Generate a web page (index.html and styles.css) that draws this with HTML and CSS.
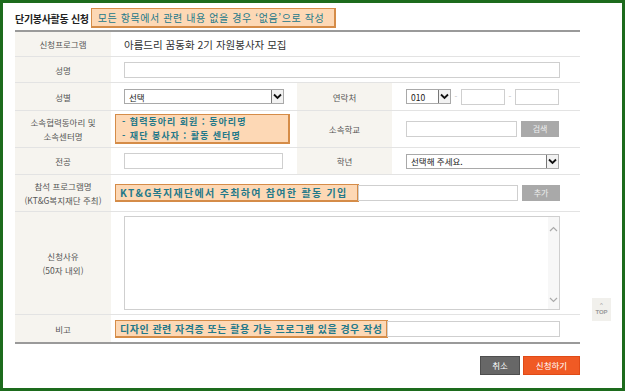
FILE: index.html
```html
<!DOCTYPE html>
<html lang="ko">

<head>
  <meta charset="UTF-8">
  <title>단기봉사활동 신청</title>
  <link rel="stylesheet" href="styles.css">
</head>

<body>
  <div class="frame">
    <div class="head">
      <div class="headTitle">단기봉사활동 신청</div>
      <div class="note noteHead">모든 항목에서 관련 내용 없을 경우 ‘없음’으로 작성</div>
    </div>

    <table class="formTable">
      <colgroup>
        <col class="colLabel">
        <col class="colMain">
        <col class="colLabel2">
        <col class="colSub">
      </colgroup>
      <tr class="row1">
        <th>신청프로그램</th>
        <td colspan="3" class="progName">아름드리 꿈동화 2기 자원봉사자 모집</td>
      </tr>
      <tr class="row2">
        <th>성명</th>
        <td colspan="3"><span class="inp inpName"></span></td>
      </tr>
      <tr class="row3">
        <th>성별</th>
        <td><span class="sel selGender">선택<span class="arrow"><svg width="9" height="7" viewBox="0 0 9 7"><path d="M1 1.5 L4.5 5 L8 1.5" fill="none" stroke="#111" stroke-width="1.8"/></svg></span></span></td>
        <th class="sub">연락처</th>
        <td class="subCell">
          <div class="phone">
            <span class="sel selPhone">010<span class="arrow"><svg width="9" height="7" viewBox="0 0 9 7"><path d="M1 1.5 L4.5 5 L8 1.5" fill="none" stroke="#111" stroke-width="1.8"/></svg></span></span>
            <span class="dash">-</span>
            <span class="inp inpPhone"></span>
            <span class="dash">-</span>
            <span class="inp inpPhone"></span>
          </div>
        </td>
      </tr>
      <tr class="row4">
        <th>소속협력동아리 및<br>소속센터명</th>
        <td><div class="note noteClub">- 협력동아리 회원 : 동아리명<br>- 재단 봉사자 : 활동 센터명</div></td>
        <th class="sub">소속학교</th>
        <td class="subCell">
          <div class="line">
            <span class="inp inpSchool"></span>
            <span class="grayBtn">검색</span>
          </div>
        </td>
      </tr>
      <tr class="row5">
        <th>전공</th>
        <td><span class="inp inpMajor"></span></td>
        <th class="sub">학년</th>
        <td class="subCell"><span class="sel selGrade">선택해 주세요.<span class="arrow"><svg width="9" height="7" viewBox="0 0 9 7"><path d="M1 1.5 L4.5 5 L8 1.5" fill="none" stroke="#111" stroke-width="1.8"/></svg></span></span></td>
      </tr>
      <tr class="row6">
        <th>참석 프로그램명<br>(KT&amp;G복지재단 주최)</th>
        <td colspan="3">
          <div class="line">
            <div class="note noteProg">KT&amp;G복지재단에서 주최하여 참여한 활동 기입</div>
            <span class="inp inpProg"></span>
            <span class="grayBtn">추가</span>
          </div>
        </td>
      </tr>
      <tr class="row7">
        <th>신청사유<br>(50자 내외)</th>
        <td colspan="3">
          <div class="textBox">
            <div class="scroll">
              <svg width="9" height="6" viewBox="0 0 9 6"><path d="M1 5 L4.5 1.5 L8 5" fill="none" stroke="#aaa" stroke-width="1.2"/></svg>
              <svg width="9" height="6" viewBox="0 0 9 6"><path d="M1 1 L4.5 4.5 L8 1" fill="none" stroke="#aaa" stroke-width="1.2"/></svg>
            </div>
          </div>
        </td>
      </tr>
      <tr class="row8">
        <th>비고</th>
        <td colspan="3">
          <div class="line">
            <div class="note noteEtc">디자인 관련 자격증 또는 활용 가능 프로그램 있을 경우 작성</div>
            <span class="inp inpEtc"></span>
          </div>
        </td>
      </tr>
    </table>

    <div class="actions">
      <span class="btn btnCancel">취소</span>
      <span class="btn btnApply">신청하기</span>
    </div>

    <div class="topBtn">
      <span class="topArrow">^</span>
      <span>TOP</span>
    </div>
  </div>
</body>

</html>
```

FILE: styles.css
```css
body {
  margin: 0;
  font-family: "Noto Sans CJK KR", "Noto Sans", sans-serif;
  background-color: white;
}

.frame {
  position: relative;
  box-sizing: border-box;
  width: 625px;
  height: 391px;
  border: 3px solid #1d6b1d;
  padding: 5px 0 0 12px;
  overflow: hidden;
}

.head {
  display: flex;
  align-items: center;
  gap: 2px;
  height: 20px;
  margin-bottom: 2px;
}

.headTitle {
  font-size: 10px;
  font-weight: bold;
  color: #222;
  letter-spacing: -0.3px;
}

.note {
  box-sizing: border-box;
  background-color: #fdd8b5;
  border: 1px solid #d58c48;
  border-right-width: 2px;
  border-bottom-width: 2px;
  color: #23798a;
  font-weight: bold;
  white-space: nowrap;
}

.noteHead {
  width: 245px;
  height: 20px;
  padding: 0 6px;
  font-size: 10px;
  line-height: 18px;
  font-weight: normal;
  letter-spacing: 0.6px;
}

.formTable {
  width: 565px;
  border-collapse: separate;
  border-spacing: 0;
  border-top: 2px solid #9a9a9a;
  border-bottom: 2px solid #9a9a9a;
  table-layout: fixed;
}

.colLabel { width: 96px; }
.colMain { width: 186px; }
.colLabel2 { width: 95px; }
.colSub { width: 188px; }

.formTable th,
.formTable td {
  padding: 0;
  border-bottom: 1px solid #e3e3e3;
  vertical-align: middle;
}

.formTable tr:last-child th,
.formTable tr:last-child td {
  border-bottom: none;
}

.formTable th {
  background-color: #f6f4ef;
  color: #555;
  font-size: 8.5px;
  font-weight: normal;
  line-height: 14px;
  text-align: center;
}

.formTable td {
  padding-left: 13px;
}

.formTable td.subCell {
  padding-left: 14px;
}

.row1 { height: 25px; }
.row2 { height: 26px; }
.row3 { height: 28px; }
.row4 { height: 37px; }
.row5 { height: 27px; }
.row6 { height: 37px; }
.row7 { height: 103px; }
.row8 { height: 27px; }

.progName {
  font-size: 10.5px;
  color: #333;
}

.inp {
  box-sizing: border-box;
  display: block;
  height: 16px;
  border: 1px solid #cfcfcf;
  background-color: white;
}

.inpName { width: 436px; }
.inpMajor { width: 159px; }
.inpPhone { width: 44px; }
.inpSchool { width: 111px; }
.inpProg { width: 160px; margin-left: -1px; }
.inpEtc { width: 173px; margin-left: -1px; }

.sel {
  box-sizing: border-box;
  display: flex;
  align-items: center;
  justify-content: space-between;
  height: 15px;
  padding-left: 4px;
  border: 1px solid #a9a9a9;
  font-size: 8.5px;
  color: #222;
  background-color: white;
}

.selGender { width: 160px; }
.selPhone { width: 45px; }
.selGrade { width: 153px; }

.arrow {
  box-sizing: border-box;
  display: flex;
  align-items: center;
  justify-content: center;
  width: 12px;
  height: 13px;
  border-left: 1px solid #777;
  background-color: #f2f2f2;
}

.phone {
  display: flex;
  align-items: center;
}

.dash {
  width: 10px;
  text-align: center;
  font-size: 8px;
  color: #bbb;
}

.line {
  display: flex;
  align-items: center;
}

.grayBtn {
  box-sizing: border-box;
  width: 38px;
  height: 16px;
  margin-left: 4px;
  background-color: #a9a9a9;
  color: #eee;
  font-size: 8px;
  line-height: 16px;
  text-align: center;
}

.noteClub {
  width: 175px;
  height: 30px;
  margin-left: -9px;
  padding: 0 0 0 6px;
  font-size: 9px;
  line-height: 13.5px;
  letter-spacing: 1px;
}

.noteProg {
  width: 244px;
  height: 18px;
  margin-left: -9px;
  padding-left: 4px;
  font-size: 10px;
  line-height: 15px;
  letter-spacing: 1.3px;
}

.noteEtc {
  width: 273px;
  height: 18px;
  margin-left: -9px;
  padding-left: 4px;
  font-size: 10px;
  line-height: 15px;
  letter-spacing: 0.5px;
}

.textBox {
  box-sizing: border-box;
  display: flex;
  justify-content: flex-end;
  width: 436px;
  height: 94px;
  border: 1px solid #cfcfcf;
}

.scroll {
  display: flex;
  flex-direction: column;
  justify-content: space-between;
  align-items: center;
  width: 11px;
  padding: 9px 0 6px;
  background-color: #f7f7f7;
}

.actions {
  display: flex;
  justify-content: flex-end;
  gap: 3px;
  width: 565px;
  margin-top: 12px;
}

.btn {
  box-sizing: border-box;
  height: 19px;
  color: white;
  font-size: 8.5px;
  line-height: 17px;
  text-align: center;
}

.btnCancel {
  width: 40px;
  background-color: #676767;
  border: 1px solid #4e4e4e;
}

.btnApply {
  width: 57px;
  background-color: #f05a24;
  border: 1px solid #e04a16;
}

.topBtn {
  position: absolute;
  left: 589px;
  top: 295px;
  width: 19px;
  height: 23px;
  display: flex;
  flex-direction: column;
  align-items: center;
  background-color: #f1f0ec;
  color: #999;
  font-family: "Liberation Sans", sans-serif;
  font-size: 6px;
  font-weight: bold;
  line-height: 7px;
  padding-top: 4px;
  box-sizing: border-box;
  box-shadow: 0 -40px 20px -12px rgba(240, 240, 240, 0.6);
}

.topArrow {
  font-weight: normal;
}
```
